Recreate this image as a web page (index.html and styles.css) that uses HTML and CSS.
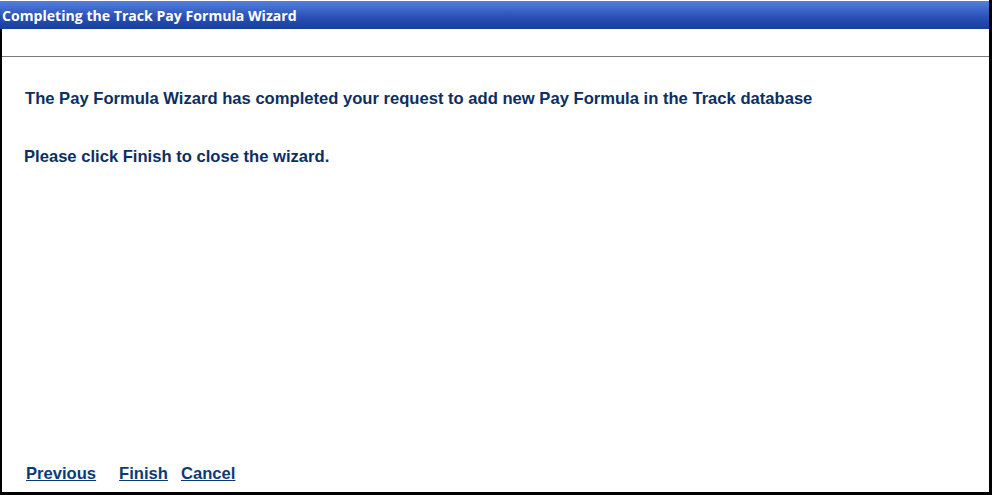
FILE: index.html
```html
<!DOCTYPE html>
<html>
<head>
<meta charset="utf-8">
<title>Completing the Track Pay Formula Wizard</title>
<link rel="stylesheet" href="styles.css">
</head>
<body>
<div class="dialog">
  <div class="titlebar">Completing the Track Pay Formula Wizard</div>
  <div class="frame">
    <div class="spacer"></div>
    <div class="content">
      <p class="msg msg-first">The Pay Formula Wizard has completed your request to add new Pay Formula in the Track database</p>
      <p class="msg msg-second">Please click Finish to close the wizard.</p>
    </div>
    <div class="actions">
      <a href="#" class="link">Previous</a>
      <a href="#" class="link link-finish">Finish</a>
      <a href="#" class="link link-cancel">Cancel</a>
    </div>
  </div>
</div>
</body>
</html>
```

FILE: styles.css
```css
html, body {
  margin: 0;
  padding: 0;
  background: #ffffff;
}
.dialog {
  width: 992px;
  height: 495px;
  box-sizing: border-box;
  padding-top: 1px;
  border-right: 3px solid #000;
  display: flex;
  flex-direction: column;
}
.titlebar {
  height: 28px;
  box-sizing: border-box;
  padding: 6px 0 0 2px;
  background: linear-gradient(#5580da, #2b52b8 55%, #1a3c9c);
  color: #ffffff;
  font-family: "Open Sans", "DejaVu Sans", sans-serif;
  font-weight: 700;
  font-size: 14.1px;
  line-height: 18px;
  white-space: nowrap;
}
.frame {
  flex: 1;
  display: flex;
  flex-direction: column;
  border-left: 2px solid #000;
  border-bottom: 3px solid #000;
}
.spacer {
  height: 27px;
  border-bottom: 1px solid #7a7a7a;
}
.content {
  flex: 1;
  padding: 0 0 0 22px;
}
.msg {
  margin: 0;
  font-family: "Liberation Sans", Arial, sans-serif;
  font-weight: 700;
  font-size: 16.6px;
  line-height: 19px;
  color: #0d2f5f;
  white-space: nowrap;
}
.msg-first {
  margin-top: 32px;
  padding-left: 1px;
}
.msg-second {
  margin-top: 39px;
}
.actions {
  display: flex;
  padding: 0 0 9px 24px;
  font-family: "Liberation Sans", Arial, sans-serif;
  font-weight: 700;
  font-size: 16.6px;
  line-height: 19px;
}
.link {
  color: #0c3a78;
  text-decoration: underline;
}
.link-finish {
  margin-left: 23px;
}
.link-cancel {
  margin-left: 13px;
}
```
